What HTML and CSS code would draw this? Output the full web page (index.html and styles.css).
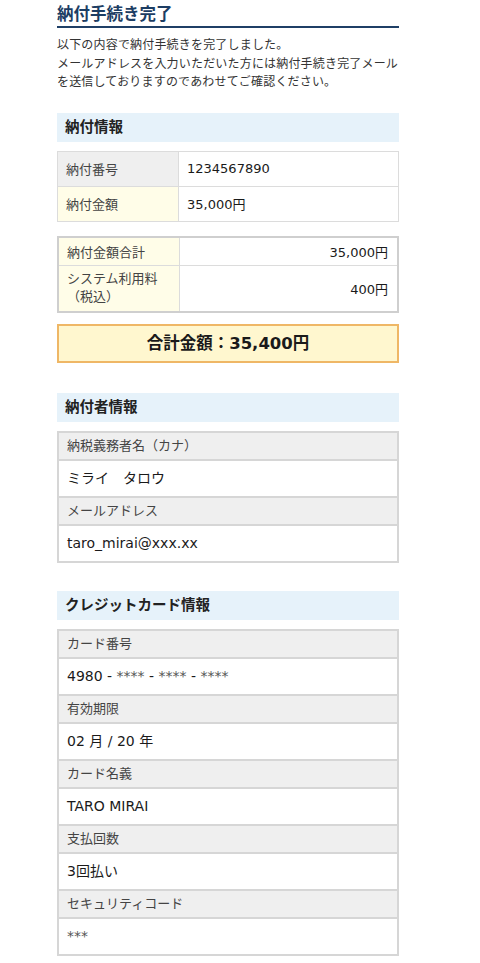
FILE: index.html
```html
<!DOCTYPE html>
<html lang="ja">
  <head>
    <meta charset="UTF-8" />
    <title>納付手続き完了</title>
    <link rel="stylesheet" href="styles.css">
  </head>
  <body>
    <div class="page">
      <h1 class="page-title">納付手続き完了</h1>
      <p class="lead">
        以下の内容で納付手続きを完了しました。<br />
        メールアドレスを入力いただいた方には納付手続き完了メールを送信しておりますのであわせてご確認ください。
      </p>

      <h2 class="section-title">納付情報</h2>
      <table class="info-table">
        <tr>
          <th class="grey">納付番号</th>
          <td>1234567890</td>
        </tr>
        <tr>
          <th>納付金額</th>
          <td>35,000円</td>
        </tr>
      </table>

      <table class="sum-table">
        <tr class="row-sum">
          <th>納付金額合計</th>
          <td>35,000円</td>
        </tr>
        <tr class="row-fee">
          <th>システム利用料<br />（税込）</th>
          <td>400円</td>
        </tr>
      </table>

      <div class="total">合計金額：35,400円</div>

      <h2 class="section-title gap">納付者情報</h2>
      <div class="stack">
        <div class="stack-label">納税義務者名（カナ）</div>
        <div class="stack-value">ミライ　タロウ</div>
        <div class="stack-label">メールアドレス</div>
        <div class="stack-value">taro_mirai@xxx.xx</div>
      </div>

      <h2 class="section-title gap card">クレジットカード情報</h2>
      <div class="stack">
        <div class="stack-label">カード番号</div>
        <div class="stack-value">4980 - <span class="mask">****</span> - <span class="mask">****</span> - <span class="mask">****</span></div>
        <div class="stack-label">有効期限</div>
        <div class="stack-value">02 月 / 20 年</div>
        <div class="stack-label">カード名義</div>
        <div class="stack-value">TARO MIRAI</div>
        <div class="stack-label">支払回数</div>
        <div class="stack-value">3回払い</div>
        <div class="stack-label">セキュリティコード</div>
        <div class="stack-value"><span class="mask">***</span></div>
      </div>
    </div>
  </body>
</html>
```

FILE: styles.css
```css
body {
  margin: 0;
  background: #fff;
  color: #333;
  font-family: "DejaVu Sans", "Noto Sans CJK JP", sans-serif;
}
.page {
  width: 342px;
  padding: 4px 0 0 57px;
}
.page-title {
  margin: 0;
  font-size: 16.5px;
  line-height: 22px;
  font-weight: bold;
  color: #1c3d63;
  border-bottom: 2px solid #1f3f66;
}
.lead {
  margin: 8px 0 0;
  font-size: 12px;
  line-height: 18.5px;
  letter-spacing: 0.18px;
  color: #333;
}
.section-title {
  margin: 21px 0 0;
  height: 29px;
  line-height: 29px;
  padding-left: 8px;
  background: #e6f2fa;
  font-size: 14.5px;
  font-weight: bold;
  color: #222;
}
.section-title.gap {
  margin-top: 30px;
}
.section-title.card {
  margin-top: 28px;
}
.info-table,
.sum-table {
  width: 100%;
  border-collapse: collapse;
  font-size: 13px;
}
.info-table {
  margin-top: 9px;
}
.info-table th,
.info-table td,
.sum-table th,
.sum-table td {
  border: 1px solid #dcdcdc;
  padding: 0 8px;
  text-align: left;
  font-weight: normal;
}
.info-table th,
.sum-table th {
  width: 104px;
  color: #444;
  background: #fffde8;
}
.info-table th.grey {
  background: #efefef;
}
.info-table td {
  height: 34px;
  color: #1a1a1a;
}
.sum-table {
  margin-top: 14px;
  border: 2px solid #cfcfcf;
}
.sum-table td {
  text-align: right;
  padding-right: 9px;
  color: #1a1a1a;
}
.sum-table .row-sum th,
.sum-table .row-sum td {
  height: 27px;
}
.sum-table .row-fee th {
  height: 45px;
  line-height: 18px;
}
.total {
  margin-top: 11px;
  height: 35px;
  line-height: 35px;
  border: 2px solid #efb766;
  background: #fff7cf;
  text-align: center;
  font-size: 16.5px;
  font-weight: bold;
  color: #1a1a1a;
}
.stack {
  margin-top: 9px;
  border: 2px solid #d6d6d6;
  border-top: 0;
}
.stack-label {
  height: 26px;
  line-height: 26px;
  padding-left: 8px;
  border-top: 2px solid #d6d6d6;
  background: #efefef;
  font-size: 13px;
  color: #444;
}
.stack-value {
  height: 35px;
  line-height: 35px;
  padding-left: 8px;
  border-top: 2px solid #d6d6d6;
  font-size: 14px;
  color: #1a1a1a;
}
.mask {
  color: #555;
}
```
